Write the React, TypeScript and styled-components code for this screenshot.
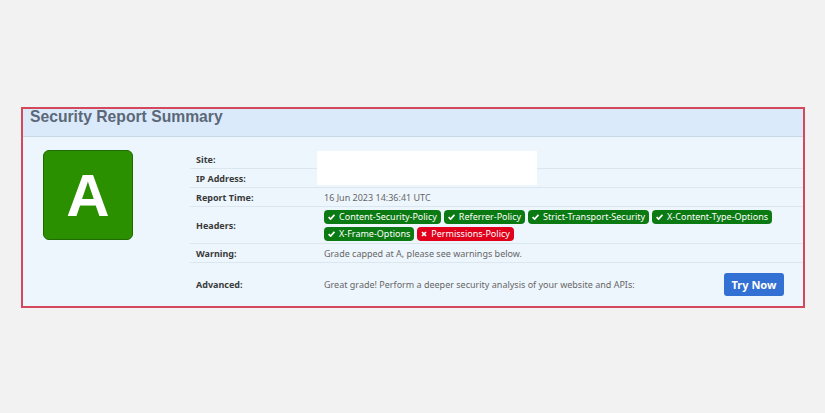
import React from "react";
import styled, { createGlobalStyle } from "styled-components";

const GlobalStyle = createGlobalStyle`
  *, *::before, *::after {
    box-sizing: border-box;
  }
  html, body {
    margin: 0;
    padding: 0;
    background: #f2f2f2;
  }
  body {
    font-family: "Noto Sans", "Open Sans", sans-serif;
  }
`;

const Page = styled.div`
  padding: 107px 21px 0 21px;
`;

const Card = styled.div`
  width: 784px;
  border: 2px solid #d5475a;
  background: #eef6fd;
`;

const CardHeader = styled.div`
  height: 28px;
  background: #dbeafb;
  border-bottom: 1px solid #c9d8e6;
  padding: 0 7px;
`;

const Title = styled.h2`
  margin: 0;
  font-family: "Liberation Sans", Arial, sans-serif;
  font-size: 15.7px;
  line-height: 15px;
  font-weight: 700;
  color: #5b6877;
`;

const CardBody = styled.div`
  display: flex;
  align-items: flex-start;
  padding: 13px 0 0 20px;
`;

const Grade = styled.div`
  width: 90px;
  height: 90px;
  flex: none;
  border: 1px solid #1f6b00;
  border-radius: 6px;
  background: #2a9000;
  color: #fff;
  display: flex;
  align-items: center;
  justify-content: center;
  font-family: "Liberation Sans", Arial, sans-serif;
  font-size: 60px;
  font-weight: 700;
  margin-right: 57px;
`;

const Table = styled.div`
  flex: 1;
  display: flex;
  flex-direction: column;
`;

const Row = styled.div<{ $height: number; $first?: boolean }>`
  display: grid;
  grid-template-columns: 128px 1fr;
  min-height: ${(p) => p.$height}px;
  border-top: ${(p) => (p.$first ? "none" : "1px solid #dce6ef")};
  font-size: 9px;
`;

const Label = styled.div`
  display: flex;
  align-items: center;
  padding-left: 6px;
  font-weight: 700;
  color: #3a3a3a;
`;

const Value = styled.div`
  display: flex;
  align-items: center;
  padding-left: 6px;
  color: #666;
`;

const Redacted = styled.div<{ $overlap?: boolean }>`
  width: 220px;
  align-self: stretch;
  margin-left: -7px;
  margin-top: ${(p) => (p.$overlap ? "-1px" : "1px")};
  margin-bottom: ${(p) => (p.$overlap ? "2px" : "0")};
  background: #fff;
`;

const Badges = styled.div`
  display: flex;
  flex-wrap: wrap;
  gap: 3px;
  padding: 2px 0;
  max-width: 460px;
`;

const Badge = styled.span<{ $ok: boolean }>`
  display: inline-flex;
  align-items: center;
  gap: 4px;
  height: 14px;
  padding: 0 4px;
  border-radius: 4px;
  background: ${(p) => (p.$ok ? "#0b7a12" : "#e0001b")};
  color: #fff;
  font-size: 9px;
  line-height: 14px;
  white-space: nowrap;
`;

const AdvancedValue = styled(Value)`
  justify-content: space-between;
  padding-right: 19px;
`;

const Button = styled.button`
  height: 23px;
  width: 60px;
  border: none;
  border-radius: 3px;
  background: #3370d4;
  color: #fff;
  font-family: "Noto Sans", "Open Sans", sans-serif;
  font-size: 11px;
  font-weight: 700;
  padding: 0;
`;

const Check = () => (
  <svg width="7" height="6" viewBox="0 0 8 7">
    <path d="M0.6 3.7 L3 6 L7.4 1" stroke="#fff" strokeWidth="1.9" fill="none" />
  </svg>
);

const Cross = () => (
  <svg width="6" height="6" viewBox="0 0 6 6">
    <path d="M1 1 L5 5 M5 1 L1 5" stroke="#fff" strokeWidth="1.7" fill="none" />
  </svg>
);

const headers = [
  { name: "Content-Security-Policy", ok: true },
  { name: "Referrer-Policy", ok: true },
  { name: "Strict-Transport-Security", ok: true },
  { name: "X-Content-Type-Options", ok: true },
  { name: "X-Frame-Options", ok: true },
  { name: "Permissions-Policy", ok: false },
];

export default function App() {
  return (
    <>
      <GlobalStyle />
      <Page>
        <Card>
          <CardHeader>
            <Title>Security Report Summary</Title>
          </CardHeader>
          <CardBody>
            <Grade>A</Grade>
            <Table>
              <Row $height={18} $first>
                <Label>Site:</Label>
                <Value>
                  <Redacted />
                </Value>
              </Row>
              <Row $height={19}>
                <Label>IP Address:</Label>
                <Value>
                  <Redacted $overlap />
                </Value>
              </Row>
              <Row $height={19}>
                <Label>Report Time:</Label>
                <Value>16 Jun 2023 14:36:41 UTC</Value>
              </Row>
              <Row $height={37}>
                <Label>Headers:</Label>
                <Value>
                  <Badges>
                    {headers.map((h) => (
                      <Badge key={h.name} $ok={h.ok}>
                        {h.ok ? <Check /> : <Cross />}
                        {h.name}
                      </Badge>
                    ))}
                  </Badges>
                </Value>
              </Row>
              <Row $height={19}>
                <Label>Warning:</Label>
                <Value>Grade capped at A, please see warnings below.</Value>
              </Row>
              <Row $height={44}>
                <Label>Advanced:</Label>
                <AdvancedValue>
                  <span>Great grade! Perform a deeper security analysis of your website and APIs:</span>
                  <Button>Try Now</Button>
                </AdvancedValue>
              </Row>
            </Table>
          </CardBody>
        </Card>
      </Page>
    </>
  );
}
